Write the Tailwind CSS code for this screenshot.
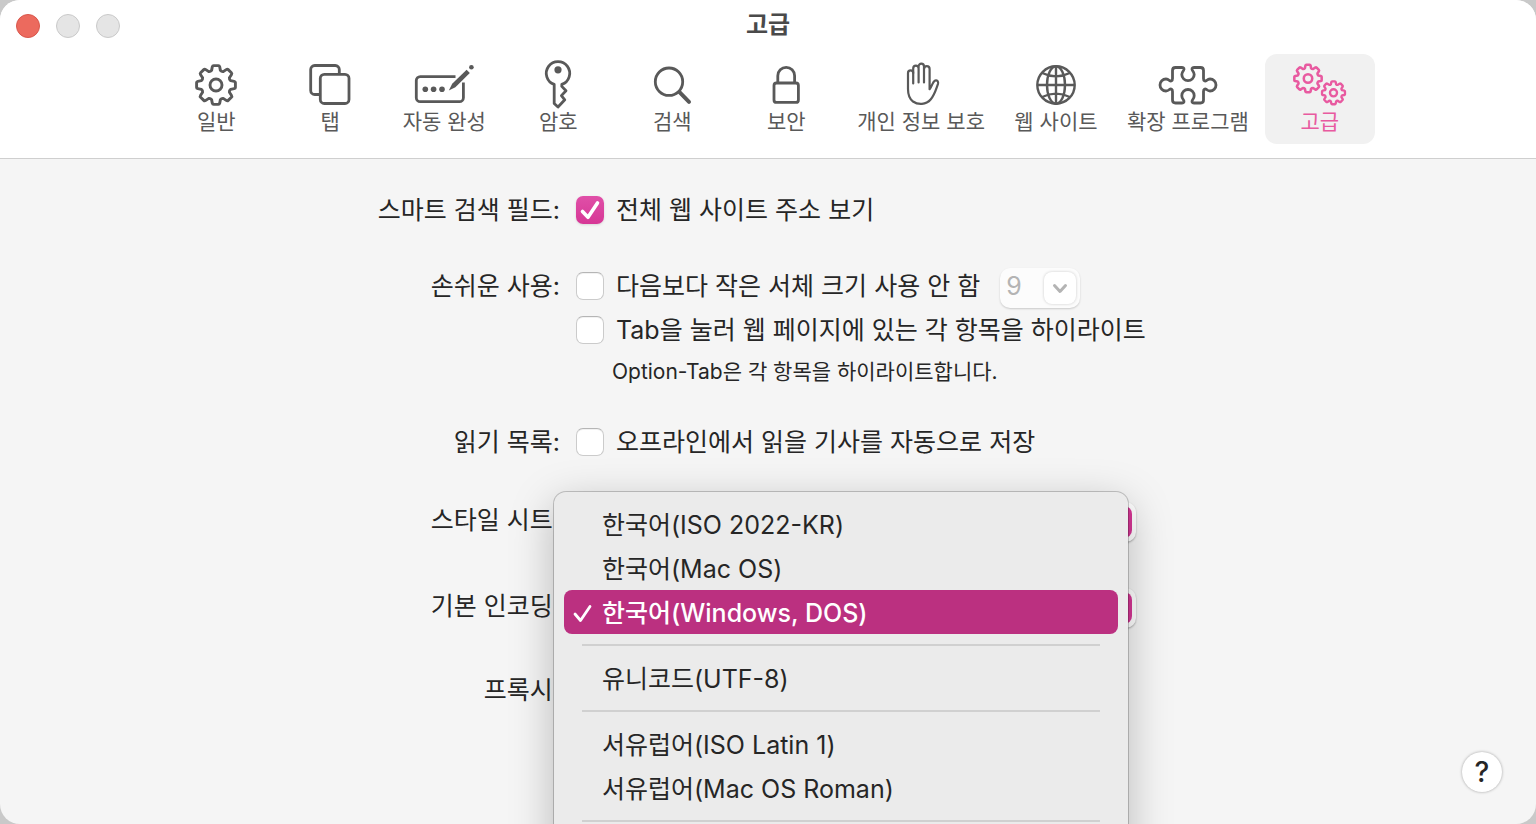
<!DOCTYPE html>
<html lang="ko">
<head>
    <meta charset="UTF-8">
    <meta name="viewport" content="width=device-width, initial-scale=1.0">
    <title>고급</title>
    <script src="https://cdn.jsdelivr.net/npm/@tailwindcss/browser@4"></script>
</head>
<body class="bg-[#c9c9c9] font-['Inter','Noto_Sans_CJK_KR',sans-serif] text-[#262626]">
    <!-- Shared icon shapes -->
    <svg class="hidden">
        <symbol id="gear" viewBox="-22 -22 44 44" overflow="visible">
            <path d="M-2.4-19.4H2.4Q3.4-19.4 3.7-18.2L4.4-14.6Q5.5-13.2 7.2-13.4L10.2-15.4Q11.4-16.2 12.2-15.4L15.4-12.2Q16.2-11.4 15.4-10.2L13.4-7.2Q13.2-5.5 14.6-4.4L18.2-3.7Q19.4-3.4 19.4-2.4V2.4Q19.4 3.4 18.2 3.7L14.6 4.4Q13.2 5.5 13.4 7.2L15.4 10.2Q16.2 11.4 15.4 12.2L12.2 15.4Q11.4 16.2 10.2 15.4L7.2 13.4Q5.5 13.2 4.4 14.6L3.7 18.2Q3.4 19.4 2.4 19.4H-2.4Q-3.4 19.4-3.7 18.2L-4.4 14.6Q-5.5 13.2-7.2 13.4L-10.2 15.4Q-11.4 16.2-12.2 15.4L-15.4 12.2Q-16.2 11.4-15.4 10.2L-13.4 7.2Q-13.2 5.5-14.6 4.4L-18.2 3.7Q-19.4 3.4-19.4 2.4V-2.4Q-19.4-3.4-18.2-3.7L-14.6-4.4Q-13.2-5.5-13.4-7.2L-15.4-10.2Q-16.2-11.4-15.4-12.2L-12.2-15.4Q-11.4-16.2-10.2-15.4L-7.2-13.4Q-5.5-13.2-4.4-14.6L-3.7-18.2Q-3.4-19.4-2.4-19.4Z"/>
            <circle r="6"/>
        </symbol>
    </svg>

    <div class="flex h-screen flex-col overflow-hidden rounded-[20px] bg-[#f5f5f5]">
        <!-- Title bar and toolbar -->
        <header class="border-b border-[#cfcfcf] bg-white pb-3.5">
            <div class="grid h-12 grid-cols-[1fr_auto_1fr] items-center px-4">
                <div class="flex gap-4 pt-1">
                    <button aria-label="닫기" class="size-6 rounded-full border border-[#d8574c] bg-[#ec6a5e]"></button>
                    <button aria-label="최소화" disabled class="size-6 rounded-full border border-[#c9c9c9] bg-[#e5e5e5]"></button>
                    <button aria-label="확대" disabled class="size-6 rounded-full border border-[#c9c9c9] bg-[#e5e5e5]"></button>
                </div>
                <h1 class="pt-0.5 text-2xl font-bold text-[#4a4a4a]">고급</h1>
            </div>
            <nav class="mt-1.5 flex justify-center gap-1 text-[21px] leading-8 text-[#595959]">
                <button class="flex h-[90px] min-w-[110px] flex-col items-center rounded-xl px-3 pt-2">
                    <svg class="h-11 w-15 shrink-0 overflow-visible" viewBox="-30 -23 60 44" fill="none" stroke="currentColor" stroke-width="2.9" stroke-linejoin="round">
                        <use href="#gear" x="-22" y="-22" width="44" height="44"/>
                    </svg>
                    일반
                </button>
                <button class="flex h-[90px] min-w-[110px] flex-col items-center rounded-xl px-3 pt-2">
                    <svg class="h-11 w-15 shrink-0 overflow-visible" viewBox="-30 -23 60 44" fill="none" stroke="currentColor" stroke-width="2.8">
                        <rect x="-9.7" y="-10.7" width="28.7" height="29.2" rx="4"/>
                        <path d="M-9.7 9.5h-5.6a4 4 0 0 1-4-4v-21a4 4 0 0 1 4-4h20.6a4 4 0 0 1 4 4v4.8"/>
                    </svg>
                    탭
                </button>
                <button class="flex h-[90px] min-w-[110px] flex-col items-center rounded-xl px-3 pt-2">
                    <svg class="h-11 w-15 shrink-0 overflow-visible" viewBox="-30 -23 60 44" fill="none" stroke="currentColor" stroke-width="2.8">
                        <path d="M11.5-8.4h-35.2a4 4 0 0 0-4 4v17.1a4 4 0 0 0 4 4h39.1a4 4 0 0 0 4-4V-2.5"/>
                        <g fill="currentColor" stroke="none">
                            <circle cx="-18.7" cy="4.2" r="2.8"/>
                            <circle cx="-10.4" cy="4.2" r="2.8"/>
                            <circle cx="-2" cy="4.2" r="2.8"/>
                            <path d="M4.8 5.4L8.2-1.2L22.6-15.3L25.8-12L11.4 2.2Z"/>
                            <circle cx="27.4" cy="-17.8" r="2.3"/>
                        </g>
                    </svg>
                    자동 완성
                </button>
                <button class="flex h-[90px] min-w-[110px] flex-col items-center rounded-xl px-3 pt-2">
                    <svg class="h-11 w-15 shrink-0 overflow-visible" viewBox="-30 -23 60 44" fill="none" stroke="currentColor" stroke-width="2.8" stroke-linejoin="round">
                        <path d="M-3.8-.6A11.7 11.7 0 1 1 3.8-.6V1.4L8 5.8L3.4 10.6L6.8 14.8L0 22L-3.8 18.4Z"/>
                        <circle cx="0" cy="-15.2" r="3.6" fill="currentColor" stroke="none"/>
                    </svg>
                    암호
                </button>
                <button class="flex h-[90px] min-w-[110px] flex-col items-center rounded-xl px-3 pt-2">
                    <svg class="h-11 w-15 shrink-0 overflow-visible" viewBox="-30 -23 60 44" fill="none" stroke="currentColor" stroke-width="2.8" stroke-linecap="round">
                        <circle cx="-3" cy="-3.3" r="13.7"/>
                        <path d="M7.5 7.2L17 16.8" stroke-width="4"/>
                    </svg>
                    검색
                </button>
                <button class="flex h-[90px] min-w-[110px] flex-col items-center rounded-xl px-3 pt-2">
                    <svg class="h-11 w-15 shrink-0 overflow-visible" viewBox="-30 -23 60 44" fill="none" stroke="currentColor" stroke-width="2.8">
                        <rect x="-12" y="-2" width="24.4" height="19.4" rx="2.5"/>
                        <path d="M-8.2-2V-9.2a8.4 8.4 0 0 1 16.8 0V-2"/>
                    </svg>
                    보안
                </button>
                <button class="flex h-[90px] min-w-[110px] flex-col items-center rounded-xl px-3 pt-2">
                    <svg class="h-11 w-15 shrink-0 overflow-visible" viewBox="-30 -23 60 44" fill="none" stroke="currentColor" stroke-width="2.2" stroke-linecap="round" stroke-linejoin="round">
                        <path d="M-7.8-1.5V-12a2.6 2.6 0 0 0-5.2 0V4C-13 9-12 13.5-8 16.5C-3 20 5 20 9.6 14.5C14 9 15 4 17-1.2C17.6-3.6 16.2-5 14-4.4C11.6-3.6 11.4 1 8.6 4.2V-16a2.8 2.8 0 0 0-5.6 0"/>
                        <path d="M-7.8-12V-16.6a2.7 2.7 0 0 1 5.4 0V-2.5M-2.4-17V-18.6a2.7 2.7 0 0 1 5.4 0V-2.5"/>
                    </svg>
                    개인 정보 보호
                </button>
                <button class="flex h-[90px] min-w-[110px] flex-col items-center rounded-xl px-3 pt-2">
                    <svg class="h-11 w-15 shrink-0 overflow-visible" viewBox="-30 -23 60 44" fill="none" stroke="currentColor" stroke-width="2.4">
                        <circle r="18.7"/>
                        <ellipse rx="9" ry="18.7"/>
                        <path d="M0-18.7V18.7M-18.7 0H18.7M-14.4-12.2Q0-5 14.4-12.2M-14.4 12.2Q0 5 14.4 12.2"/>
                    </svg>
                    웹 사이트
                </button>
                <button class="flex h-[90px] min-w-[110px] flex-col items-center rounded-xl px-3 pt-2">
                    <svg class="h-11 w-15 shrink-0 overflow-visible" viewBox="-30 -23 60 44" fill="none" stroke="currentColor" stroke-width="2.8" stroke-linejoin="round">
                        <path d="M-12.5-17.5H-6C-4-17.5-3.5-16-4.5-14.5C-6-12.5-6.2-12-6.2-10.5a6.2 6.2 0 0 0 12.4 0C6.2-12 6-12.5 4.5-14.5C3.5-16 4-17.5 6-17.5H12.5q3 0 3 3V-6.5C15.5-4 17-3.5 18.5-4.5C20-5.7 21-6 22-6a6 6 0 0 1 0 12C21 6 20 5.7 18.5 4.5C17 3.5 15.5 4 15.5 6.5V15q0 3-3 3H6C4 18 3.5 16.5 4.5 15C6 13 6.2 12 6.2 10.7a6.2 6.2 0 0 0-12.4 0C-6.2 12-6 13-4.5 15C-3.5 16.5-4 18-6 18H-12.5q-3 0-3-3V6.5C-15.5 4-17 3.5-18.5 4.5C-20 5.7-21 6-22 6a6 6 0 0 1 0-12C-21-6-20-5.7-18.5-4.5C-17-3.5-15.5-4-15.5-6.5V-14.5q0-3 3-3Z"/>
                    </svg>
                    확장 프로그램
                </button>
                <button aria-current="page" class="flex h-[90px] min-w-[110px] flex-col items-center rounded-xl bg-[#f1f1f1] px-3 pt-2 text-[#e85aa0]">
                    <svg class="h-11 w-15 shrink-0 overflow-visible" viewBox="-30 -23 60 44" fill="none" stroke="currentColor" stroke-linejoin="round">
                        <use href="#gear" x="-27.5" y="-22" width="31" height="31" stroke-width="3.6"/>
                        <use href="#gear" x="0.5" y="-5.2" width="26" height="26" stroke-width="4"/>
                    </svg>
                    고급
                </button>
            </nav>
        </header>

        <main class="flex flex-1 flex-col">
            <form class="grid grid-cols-[7fr_12fr] gap-x-4 pt-[29px] text-[25px] leading-11">
                <!-- Smart search field -->
                <div class="h-11 text-right">스마트 검색 필드:</div>
                <label class="flex h-11 items-center gap-3">
                    <span class="grid place-items-center">
                        <input type="checkbox" checked class="col-start-1 row-start-1 size-7 appearance-none rounded-[7px] bg-linear-to-b from-[#e04fa8] to-[#d63695] shadow-sm">
                        <svg class="pointer-events-none col-start-1 row-start-1 size-7" viewBox="0 0 28 28" fill="none" stroke="white" stroke-width="3.6" stroke-linecap="round" stroke-linejoin="round">
                            <path d="M6.5 15.5L12 21.3L21.5 7"/>
                        </svg>
                    </span>
                    전체 웹 사이트 주소 보기
                </label>

                <!-- Accessibility -->
                <div class="mt-8 h-11 text-right">손쉬운 사용:</div>
                <div class="mt-8">
                    <div class="flex h-11 items-end gap-5">
                        <label class="flex h-11 items-center gap-3">
                            <input type="checkbox" class="size-7 appearance-none rounded-[7px] border border-[#cbcbcb] border-t-[#b5b5b5] bg-white inset-shadow-2xs">
                            다음보다 작은 서체 크기 사용 안 함
                        </label>
                        <div class="grid h-10 w-20 items-center">
                            <select disabled aria-label="최소 서체 크기" class="col-start-1 row-start-1 h-10 w-20 appearance-none rounded-[10px] bg-[#fcfcfc] pb-1 pl-1.5 leading-9 text-[#b4b4b4] opacity-100 shadow-[0_1px_2px_rgba(0,0,0,0.18)]">
                                <option>9</option>
                            </select>
                            <span class="pointer-events-none col-start-1 row-start-1 mr-1 grid size-8 place-items-center justify-self-end rounded-lg bg-white shadow-[0_0_3px_rgba(0,0,0,0.2)]">
                                <svg class="size-4" viewBox="0 0 16 16" fill="none" stroke="#b4b4b4" stroke-width="3" stroke-linecap="round" stroke-linejoin="round"><path d="M2.5 5.5L8 11.5L13.5 5.5"/></svg>
                            </span>
                        </div>
                    </div>
                    <label class="flex h-11 items-center gap-3">
                        <input type="checkbox" class="size-7 appearance-none rounded-[7px] border border-[#cbcbcb] border-t-[#b5b5b5] bg-white inset-shadow-2xs">
                        Tab을 눌러 웹 페이지에 있는 각 항목을 하이라이트
                    </label>
                    <p class="pl-9 text-[21px] leading-10">Option-Tab은 각 항목을 하이라이트합니다.</p>
                </div>

                <!-- Reading list -->
                <div class="mt-7 h-11 text-right">읽기 목록:</div>
                <label class="mt-7 flex h-11 items-center gap-3">
                    <input type="checkbox" class="size-7 appearance-none rounded-[7px] border border-[#cbcbcb] border-t-[#b5b5b5] bg-white inset-shadow-2xs">
                    오프라인에서 읽을 기사를 자동으로 저장
                </label>

                <!-- Style sheet -->
                <label for="stylesheet" class="mt-[34px] h-11 text-right">스타일 시트:</label>
                <div class="mt-[38px] grid h-10 w-[560px] items-center">
                    <select id="stylesheet" class="col-start-1 row-start-1 h-10 appearance-none rounded-[10px] bg-white pl-3 shadow-[0_1px_2px_rgba(0,0,0,0.3)]"></select>
                    <span class="pointer-events-none col-start-1 row-start-1 mr-1 h-8 w-8 justify-self-end rounded-lg bg-[#d63695]"></span>
                </div>

                <!-- Default encoding, with its menu open -->
                <label for="encoding" class="mt-[42px] h-11 text-right">기본 인코딩:</label>
                <div class="relative mt-[46px] grid h-10 w-[560px] items-center">
                    <select id="encoding" class="col-start-1 row-start-1 h-10 appearance-none rounded-[10px] bg-white pl-3 shadow-[0_1px_2px_rgba(0,0,0,0.3)]"></select>
                    <span class="pointer-events-none col-start-1 row-start-1 mr-1 h-8 w-8 justify-self-end rounded-lg bg-[#d63695]"></span>
                    <ul role="listbox" aria-label="기본 인코딩" class="absolute right-2 -left-[22px] -top-24 z-10 h-[400px] rounded-xl bg-[#ebebeb] p-2.5 leading-[42px] shadow-[0_0_0_1px_rgba(0,0,0,0.2),0_12px_44px_rgba(0,0,0,0.26)]">
                        <li role="option" class="pt-0.5 pl-[38px]">한국어(ISO 2022-KR)</li>
                        <li role="option" class="pt-0.5 pl-[38px]">한국어(Mac OS)</li>
                        <li role="option" aria-selected="true" class="flex items-center rounded-lg bg-[#bb3080] pt-0.5 pl-2 font-medium text-white">
                            <svg class="mr-2.5 size-5" viewBox="0 0 20 20" fill="none" stroke="currentColor" stroke-width="2.8" stroke-linecap="round" stroke-linejoin="round"><path d="M3 11L8.5 17.5L18 3.5"/></svg>
                            한국어(Windows, DOS)
                        </li>
                        <li role="separator" class="mx-[18px] my-2.5 h-0.5 bg-[#d0d0d0]"></li>
                        <li role="option" class="pt-0.5 pl-[38px]">유니코드(UTF-8)</li>
                        <li role="separator" class="mx-[18px] my-2.5 h-0.5 bg-[#d0d0d0]"></li>
                        <li role="option" class="pt-0.5 pl-[38px]">서유럽어(ISO Latin 1)</li>
                        <li role="option" class="pt-0.5 pl-[38px]">서유럽어(Mac OS Roman)</li>
                        <li role="separator" class="mx-[18px] my-2.5 h-0.5 bg-[#d0d0d0]"></li>
                    </ul>
                </div>

                <!-- Proxies -->
                <div class="mt-10 h-11 text-right">프록시:</div>
            </form>

            <button aria-label="도움말" class="mt-auto mr-[34px] mb-8 size-10 self-end rounded-full bg-white text-[28px] leading-10 font-medium shadow-[0_0_3px_rgba(0,0,0,0.35)]">?</button>
        </main>
    </div>
</body>
</html>
